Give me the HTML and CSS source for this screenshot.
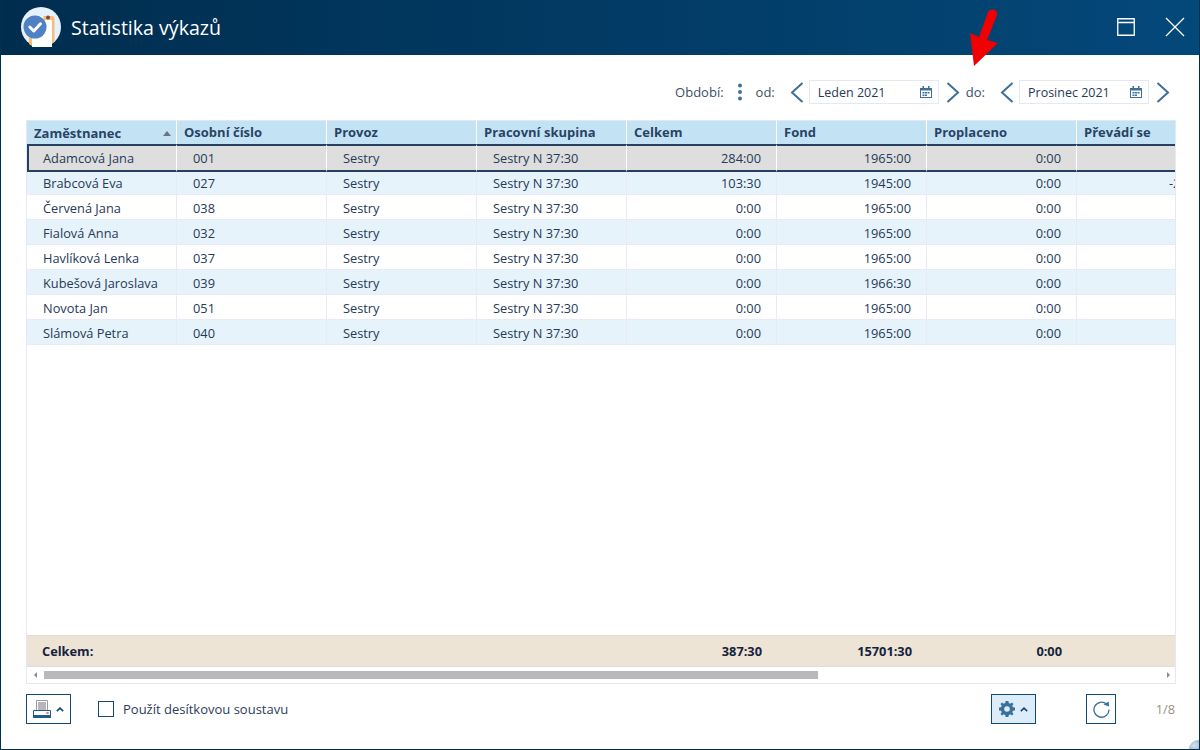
FILE: index.html
```html
<!DOCTYPE html>
<html lang="cs">
<head>
<meta charset="utf-8">
<title>Statistika výkazů</title>
<link rel="stylesheet" href="styles.css">
</head>
<body>
<div class="window">
  <header class="titlebar">
    <svg class="logo" width="40" height="40" viewBox="0 0 40 40">
      <circle cx="20" cy="20" r="20" fill="#e6f2fb"/>
      <path d="M8 26H11V39L8 37ZM31 13H33.500V35L31 36Z" fill="#f6bd78"/>
      <path d="M11 9H31V40H11Z" fill="#fff"/>
      <path d="M22 9L23 13H33.500V11L32 9Z" fill="#f6bd78"/>
      <circle cx="27" cy="10.500" r="2" fill="#7b4a3a"/>
      <circle cx="14" cy="20" r="11.500" fill="#4f81c4"/>
      <path d="M8.800 20L12.800 24 19.500 16.800" fill="none" stroke="#fff" stroke-width="3" stroke-linecap="round" stroke-linejoin="round"/>
    </svg>
    <h1 class="title">Statistika výkazů</h1>
    <div class="win-buttons">
      <svg width="18" height="18" viewBox="0 0 18 18"><path d="M.75.75H17.250V17.250H.75ZM1 4.500H17" fill="none" stroke="#fff" stroke-width="1.300"/></svg>
      <svg width="20" height="20" viewBox="0 0 20 20"><path d="M1 1L19 19M19 1L1 19" fill="none" stroke="#fff" stroke-width="1.300"/></svg>
    </div>
  </header>

  <main class="content">
    <div class="period">
      <span class="label">Období:</span>
      <svg class="dots" width="6" height="18" viewBox="0 0 6 18"><circle cx="3" cy="2.500" r="2" fill="#3f7097"/><circle cx="3" cy="9" r="2" fill="#3f7097"/><circle cx="3" cy="15.500" r="2" fill="#3f7097"/></svg>
      <span class="label od">od:</span>
      <svg class="chev prev" width="14" height="21" viewBox="0 0 14 21"><path d="M12.500 1L2 10.500 12.500 20" fill="none" stroke="#3d6f98" stroke-width="2"/></svg>
      <div class="month">Leden 2021
        <svg class="cal" width="12" height="12" viewBox="0 0 12 12"><path d="M0 2H12V12H0Z" fill="#3f7097"/><path d="M1 4.500H11V11H1Z" fill="#fff"/><path d="M2.500 0H4V3H2.500ZM8 0H9.500V3H8ZM2.500 6H4.500V7.500H2.500ZM5 6H7V7.500H5ZM7.500 6H9.500V7.500H7.500ZM2.500 8.500H4.500V10H2.500ZM5 8.500H7V10H5Z" fill="#3f7097"/></svg>
      </div>
      <svg class="chev next" width="14" height="21" viewBox="0 0 14 21"><path d="M1.500 1L12 10.500 1.500 20" fill="none" stroke="#3d6f98" stroke-width="2"/></svg>
      <span class="label do">do:</span>
      <svg class="chev prev" width="14" height="21" viewBox="0 0 14 21"><path d="M12.500 1L2 10.500 12.500 20" fill="none" stroke="#3d6f98" stroke-width="2"/></svg>
      <div class="month">Prosinec 2021
        <svg class="cal" width="12" height="12" viewBox="0 0 12 12"><path d="M0 2H12V12H0Z" fill="#3f7097"/><path d="M1 4.500H11V11H1Z" fill="#fff"/><path d="M2.500 0H4V3H2.500ZM8 0H9.500V3H8ZM2.500 6H4.500V7.500H2.500ZM5 6H7V7.500H5ZM7.500 6H9.500V7.500H7.500ZM2.500 8.500H4.500V10H2.500ZM5 8.500H7V10H5Z" fill="#3f7097"/></svg>
      </div>
      <svg class="chev next" width="14" height="21" viewBox="0 0 14 21"><path d="M1.500 1L12 10.500 1.500 20" fill="none" stroke="#3d6f98" stroke-width="2"/></svg>
    </div>

    <section class="grid-panel">
      <div class="grid-clip">
        <div class="row head">
          <div class="cell sorted">Zaměstnanec<span class="sort"></span></div>
          <div class="cell">Osobní číslo</div>
          <div class="cell">Provoz</div>
          <div class="cell">Pracovní skupina</div>
          <div class="cell">Celkem</div>
          <div class="cell">Fond</div>
          <div class="cell">Proplaceno</div>
          <div class="cell">Převádí se</div>
        </div>
        <div class="row selected">
          <div class="cell">Adamcová Jana</div><div class="cell">001</div><div class="cell">Sestry</div><div class="cell">Sestry N 37:30</div>
          <div class="cell num">284:00</div><div class="cell num">1965:00</div><div class="cell num">0:00</div><div class="cell num"></div>
        </div>
        <div class="row alt">
          <div class="cell">Brabcová Eva</div><div class="cell">027</div><div class="cell">Sestry</div><div class="cell">Sestry N 37:30</div>
          <div class="cell num">103:30</div><div class="cell num">1945:00</div><div class="cell num">0:00</div><div class="cell num cut">-203:30</div>
        </div>
        <div class="row">
          <div class="cell">Červená Jana</div><div class="cell">038</div><div class="cell">Sestry</div><div class="cell">Sestry N 37:30</div>
          <div class="cell num">0:00</div><div class="cell num">1965:00</div><div class="cell num">0:00</div><div class="cell num"></div>
        </div>
        <div class="row alt">
          <div class="cell">Fialová Anna</div><div class="cell">032</div><div class="cell">Sestry</div><div class="cell">Sestry N 37:30</div>
          <div class="cell num">0:00</div><div class="cell num">1965:00</div><div class="cell num">0:00</div><div class="cell num"></div>
        </div>
        <div class="row">
          <div class="cell">Havlíková Lenka</div><div class="cell">037</div><div class="cell">Sestry</div><div class="cell">Sestry N 37:30</div>
          <div class="cell num">0:00</div><div class="cell num">1965:00</div><div class="cell num">0:00</div><div class="cell num"></div>
        </div>
        <div class="row alt">
          <div class="cell">Kubešová Jaroslava</div><div class="cell">039</div><div class="cell">Sestry</div><div class="cell">Sestry N 37:30</div>
          <div class="cell num">0:00</div><div class="cell num">1966:30</div><div class="cell num">0:00</div><div class="cell num"></div>
        </div>
        <div class="row">
          <div class="cell">Novota Jan</div><div class="cell">051</div><div class="cell">Sestry</div><div class="cell">Sestry N 37:30</div>
          <div class="cell num">0:00</div><div class="cell num">1965:00</div><div class="cell num">0:00</div><div class="cell num"></div>
        </div>
        <div class="row alt">
          <div class="cell">Slámová Petra</div><div class="cell">040</div><div class="cell">Sestry</div><div class="cell">Sestry N 37:30</div>
          <div class="cell num">0:00</div><div class="cell num">1965:00</div><div class="cell num">0:00</div><div class="cell num"></div>
        </div>
        <div class="grid-fill"></div>
        <div class="row total">
          <div class="cell">Celkem:</div><div class="cell"></div><div class="cell"></div><div class="cell"></div>
          <div class="cell num">387:30</div><div class="cell num">15701:30</div><div class="cell num">0:00</div><div class="cell num"></div>
        </div>
      </div>
      <div class="hscroll">
        <span class="arrow left"></span>
        <div class="track"><div class="thumb"></div></div>
        <span class="arrow right"></span>
      </div>
    </section>

    <footer class="actions">
      <button class="btn split" type="button">
        <svg width="18" height="18" viewBox="0 0 18 18"><path d="M3.500.5H14.500V10.500H3.500Z" fill="#fff" stroke="#9a9aa3"/><path d="M5 2H13V10H5Z" fill="#b8b4bb"/><path d="M.5 10.500H17.500V17.500H.5Z" fill="#fff" stroke="#1d5e8c"/><path d="M0 15H18V18H0Z" fill="#1d5e8c"/><circle cx="14.500" cy="13" r="1.300" fill="#ee7b7b"/></svg>
        <svg class="caret" width="8" height="5" viewBox="0 0 8 5"><path d="M.8 4.200L4 1.200 7.200 4.200" fill="none" stroke="#0f4a78" stroke-width="1.600"/></svg>
      </button>
      <label class="check"><span class="box"></span>Použít desítkovou soustavu</label>
      <div class="spacer"></div>
      <button class="btn split active" type="button">
        <svg width="16" height="16" viewBox="0 0 16 16"><path fill-rule="evenodd" d="M6.600 0H9.400L9.800 2.100 11.200 2.700 13 1.500 14.500 3 13.300 4.800 13.900 6.200 16 6.600V9.400L13.900 9.800 13.300 11.200 14.500 13 13 14.500 11.200 13.300 9.800 13.900 9.400 16H6.600L6.200 13.900 4.800 13.300 3 14.500 1.500 13 2.700 11.200 2.100 9.800 0 9.400V6.600L2.100 6.200 2.700 4.800 1.500 3 3 1.500 4.800 2.700 6.200 2.100ZM8 5.200A2.800 2.800 0 1 0 8 10.800 2.800 2.800 0 1 0 8 5.200Z" fill="#3a7099"/></svg>
        <svg class="caret" width="8" height="5" viewBox="0 0 8 5"><path d="M.8 4.200L4 1.200 7.200 4.200" fill="none" stroke="#0f4a78" stroke-width="1.600"/></svg>
      </button>
      <button class="btn refresh" type="button">
        <svg width="17" height="17" viewBox="0 0 17 17"><path d="M13.600 3.200A7.500 7.500 0 1 0 16 8.500" fill="none" stroke="#3a7099" stroke-width="1.300"/><path d="M10.500 3.600L16 5.600 15.800 .6Z" fill="#3a7099"/></svg>
      </button>
      <span class="pager">1/8</span>
    </footer>
  </main>

  <svg class="pointer" width="40" height="60" viewBox="0 0 40 60">
    <path d="M29 4L20 29 11 25 15 58 39 35 28 32 38 7Q39 2 33.500 1.500 30 1.500 29 4Z" fill="#f00000"/>
  </svg>
  <span class="grip"></span>
</div>
</body>
</html>
```

FILE: styles.css
```css
* { box-sizing: border-box; }

html, body {
  margin: 0;
  height: 100%;
  background: #fff;
}

body {
  font-family: "Open Sans", "Noto Sans", sans-serif;
  font-size: 12.800px;
  color: #263a57;
}

.window {
  position: relative;
  width: 1200px;
  height: 750px;
  display: flex;
  flex-direction: column;
  border: 1px solid #00304f;
  border-top: 0;
  overflow: hidden;
}

.titlebar {
  flex: none;
  height: 55px;
  margin: 0 -1px;
  padding: 7px 0 8px 21px;
  display: flex;
  align-items: center;
  background: linear-gradient(90deg, #002d4e 0%, #04487a 100%);
}

.logo { flex: none; }

.title {
  margin: 0 0 0 10px;
  font-size: 19.600px;
  font-weight: 400;
  color: #fff;
}

.win-buttons {
  margin-left: auto;
  padding-right: 15px;
  display: flex;
  align-items: center;
  gap: 30px;
}

.content {
  flex: 1;
  min-height: 0;
  padding: 0 23px 0 25px;
  display: flex;
  flex-direction: column;
}

.period {
  flex: none;
  height: 65px;
  padding-top: 9px;
  margin-right: 6px;
  display: flex;
  align-items: center;
  justify-content: flex-end;
  font-size: 13px;
  color: #3c4e68;
}

.dots { margin: 0 13px; }
.label.od { margin-right: 15px; }
.label.do { margin: 0 15px 0 6px; }
.chev.prev { margin-right: 5px; }
.chev.next { margin-left: 7px; }

.month {
  width: 130px;
  height: 24px;
  padding: 0 6px 0 8px;
  display: flex;
  align-items: center;
  justify-content: space-between;
  border: 1px solid #e5e8f2;
  color: #263a57;
  font-size: 12.500px;
}

.grid-panel {
  flex: none;
  height: 564px;
  display: flex;
  flex-direction: column;
  border: 1px solid #e6e8f5;
  border-top: 0;
}

.grid-clip {
  flex: 1;
  min-height: 0;
  display: flex;
  flex-direction: column;
  overflow: hidden;
}

.row {
  flex: none;
  width: 1200px;
  height: 25px;
  display: grid;
  grid-template-columns: repeat(8, 150px);
  grid-auto-rows: 25px;
  background: #fff;
}

.row.alt { background: #e6f3fa; }

.cell {
  padding-top: 1px;
  padding-left: 16px;
  line-height: 25px;
  white-space: nowrap;
  border-right: 1px solid #e8ebf5;
  border-bottom: 1px solid #e8ebf5;
}

.row .num {
  padding: 1px 15px 0 0;
  text-align: right;
}

.row .cut { padding-right: 13px; }

.head {
  background: #c3e3f5;
  font-size: 13px;
  font-weight: 700;
  color: #2a4365;
}

.head .cell {
  padding-top: 0;
  padding-left: 7px;
  border-right-color: #fff;
  border-bottom: 0;
  border-top: 1px solid #e0e8f3;
  line-height: 23px;
}

.cell.sorted {
  display: flex;
  align-items: center;
  justify-content: space-between;
  padding-right: 5px;
}

.sort {
  width: 0;
  height: 0;
  border-left: 4.500px solid transparent;
  border-right: 4.500px solid transparent;
  border-bottom: 5px solid #6b7280;
}

.selected {
  position: relative;
  height: 28px;
  grid-auto-rows: 28px;
  margin: -1px 0 -2px;
  background: #dedede;
  z-index: 1;
}

.selected::before {
  content: "";
  position: absolute;
  left: 0;
  top: 0;
  bottom: 0;
  width: 2px;
  background: #254060;
}

.row.selected .cell {
  padding-top: 0;
  line-height: 24px;
  border-top: 2px solid #254060;
  border-bottom: 2px solid #254060;
  border-right-color: #fff;
}

.grid-fill { flex: 1; }

.total {
  height: 32px;
  grid-auto-rows: 30px;
  background: #eee4d6;
  border-top: 1px solid #e3dbcf;
  border-bottom: 1px solid #dedede;
  font-weight: 700;
  color: #14233d;
}

.row.total .cell {
  padding-top: 0;
  padding-left: 15px;
  line-height: 30px;
  border: 0;
}

.row.total .num { padding-left: 0; }

.hscroll {
  flex: none;
  height: 16px;
  padding: 0 5px 0 7px;
  display: flex;
  align-items: center;
  gap: 2px;
}

.track { flex: 1; height: 8px; }

.thumb {
  width: 774px;
  height: 100%;
  background: #b8b8b8;
}

.arrow {
  flex: none;
  width: 0;
  height: 0;
  border-top: 3px solid transparent;
  border-bottom: 3px solid transparent;
}

.arrow.left { margin-right: 5px; border-right: 3px solid #8a8a8a; }
.arrow.right { margin-left: 6px; border-left: 3px solid #8a8a8a; }

.actions {
  flex: none;
  height: 30px;
  margin-top: 10px;
  display: flex;
  align-items: center;
}

.btn {
  height: 30px;
  padding: 0;
  display: flex;
  align-items: center;
  justify-content: center;
  background: #fff;
  border: 1px solid #0f4a78;
  font: inherit;
}

.btn.split { width: 45px; gap: 5px; }
.btn.active { background: #dcedf9; margin-right: 50px; }
.btn.refresh { width: 30px; margin-right: 39px; }

.check {
  margin-left: 27px;
  display: flex;
  align-items: center;
  gap: 9px;
  font-size: 13px;
  color: #2b3d5a;
}

.box {
  width: 16px;
  height: 16px;
  border: 1px solid #0f4a78;
}

.spacer { flex: 1; }

.pager {
  color: #9a9288;
  width: 20px;
  margin-right: 1px;
  text-align: right;
}

.pointer {
  position: absolute;
  left: 958px;
  top: 8px;
}

.grip {
  position: absolute;
  right: -8px;
  bottom: -9px;
  width: 18px;
  height: 18px;
  border-radius: 50%;
  background: radial-gradient(circle at 30% 30%, #d4e3ef, #3f7097);
}
```
